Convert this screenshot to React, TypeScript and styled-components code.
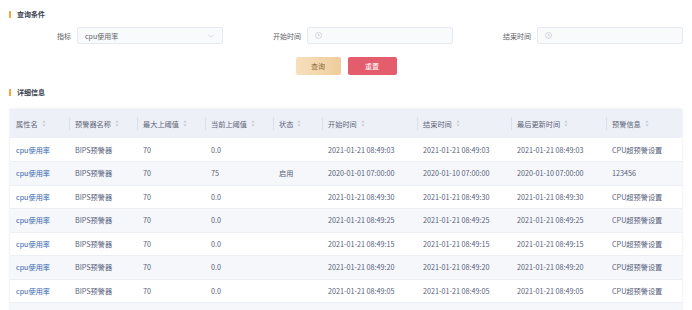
import React from "react";
import styled, { createGlobalStyle } from "styled-components";

const GlobalStyle = createGlobalStyle`
  html, body {
    margin: 0;
    padding: 0;
    background: #fff;
    font-family: "Noto Sans CJK SC", "Noto Sans", sans-serif;
  }
`;

const Page = styled.div`
  width: 692px;
  height: 310px;
  overflow: hidden;
  display: flex;
  flex-direction: column;
  padding-top: 9px;
  box-sizing: border-box;
`;

const SectionTitle = styled.div<{ $mt?: number }>`
  display: flex;
  align-items: center;
  height: 10px;
  margin-left: 9px;
  margin-top: ${(p) => p.$mt ?? 0}px;
  font-size: 7px;
  font-weight: 700;
  color: #39414f;

  &::before {
    content: "";
    width: 2px;
    height: 7px;
    background: #f2a93b;
    margin-right: 6px;
  }
`;

const FormRow = styled.div`
  display: grid;
  grid-template-columns: 230px 230px 230px;
  margin-top: 8px;
`;

const Field = styled.div`
  display: flex;
  align-items: center;
`;

const Label = styled.span`
  width: 71px;
  margin-right: 6px;
  text-align: right;
  font-size: 7px;
  color: #606266;
`;

const InputBox = styled.div`
  width: 146px;
  height: 17px;
  box-sizing: border-box;
  border: 1px solid #e6e9ef;
  border-radius: 2px;
  background: #f9fafc;
  display: flex;
  align-items: center;
  padding: 0 8px 0 7px;
  font-size: 7px;
  color: #606266;
`;

const SelectText = styled.span`
  flex: 1;
`;

const Buttons = styled.div`
  display: flex;
  justify-content: center;
  gap: 7px;
  margin-top: 13px;
`;

const Button = styled.button<{ $variant: "query" | "reset" }>`
  width: ${(p) => (p.$variant === "query" ? 45 : 49)}px;
  height: 18px;
  border: none;
  border-radius: 2px;
  padding: 0;
  font-family: inherit;
  font-size: 7px;
  cursor: pointer;
  color: ${(p) => (p.$variant === "query" ? "#8a6a3c" : "#fff")};
  background: ${(p) =>
    p.$variant === "query"
      ? "linear-gradient(90deg, #f7dfbd, #eecd9b)"
      : "#e35d6d"};
`;

const TableWrap = styled.div`
  margin: 12px 0 0 10px;
  width: 672px;
  box-shadow: 0 0 3px rgba(0, 0, 0, 0.1);
`;

const Table = styled.table`
  width: 100%;
  border-collapse: collapse;
  table-layout: fixed;
  font-size: 7.2px;
`;

const Th = styled.th`
  position: relative;
  height: 29px;
  padding: 0 0 0 6px;
  background: #edf0f7;
  color: #5d6577;
  font-weight: 400;
  text-align: left;
  white-space: nowrap;

  &:not(:first-child)::before {
    content: "";
    position: absolute;
    left: 0;
    top: 8px;
    height: 13px;
    width: 1px;
    background: #dcdfe8;
  }
`;

const HeadInner = styled.span`
  display: inline-flex;
  align-items: center;
  gap: 4px;
`;

const Tr = styled.tr<{ $striped: boolean }>`
  height: 23.5px;
  background: ${(p) => (p.$striped ? "#f5f7fa" : "#fff")};
  border-bottom: 1px solid #ebeef5;
`;

const Td = styled.td<{ $link?: boolean }>`
  padding: 0 0 0 6px;
  color: ${(p) => (p.$link ? "#3565ad" : "#56607a")};
  white-space: nowrap;
  overflow: hidden;
`;

const SortIcon = () => (
  <svg width="4" height="7" viewBox="0 0 4 7">
    <path d="M2 0.5 L3.6 2.6 H0.4 Z" fill="#c0c4cc" />
    <path d="M2 6.5 L3.6 4.4 H0.4 Z" fill="#c0c4cc" />
  </svg>
);

const ClockIcon = () => (
  <svg width="7" height="7" viewBox="0 0 14 14">
    <circle cx="7" cy="7" r="6" fill="none" stroke="#c0c4cc" strokeWidth="1.3" />
    <path d="M7 3.5 V7 H9.8" fill="none" stroke="#c0c4cc" strokeWidth="1.3" />
  </svg>
);

const Chevron = () => (
  <svg width="6" height="4" viewBox="0 0 12 8">
    <path d="M1 1.5 L6 6.5 L11 1.5" fill="none" stroke="#c0c4cc" strokeWidth="1.2" />
  </svg>
);

const columns = [
  { title: "属性名", width: 59 },
  { title: "预警器名称", width: 68 },
  { title: "最大上阈值", width: 68 },
  { title: "当前上阈值", width: 68 },
  { title: "状态", width: 49 },
  { title: "开始时间", width: 95 },
  { title: "结束时间", width: 94 },
  { title: "最后更新时间", width: 95 },
  { title: "预警信息", width: 76 },
];

const t = (s: string) => `2021-01-21 08:49:${s}`;

const rows: string[][] = [
  ["cpu使用率", "BIPS预警器", "70", "0.0", "", t("03"), t("03"), t("03"), "CPU超预警设置"],
  ["cpu使用率", "BIPS预警器", "70", "75", "启用", "2020-01-01 07:00:00", "2020-01-10 07:00:00", "2020-01-10 07:00:00", "123456"],
  ["cpu使用率", "BIPS预警器", "70", "0.0", "", t("30"), t("30"), t("30"), "CPU超预警设置"],
  ["cpu使用率", "BIPS预警器", "70", "0.0", "", t("25"), t("25"), t("25"), "CPU超预警设置"],
  ["cpu使用率", "BIPS预警器", "70", "0.0", "", t("15"), t("15"), t("15"), "CPU超预警设置"],
  ["cpu使用率", "BIPS预警器", "70", "0.0", "", t("20"), t("20"), t("20"), "CPU超预警设置"],
  ["cpu使用率", "BIPS预警器", "70", "0.0", "", t("05"), t("05"), t("05"), "CPU超预警设置"],
  // next row starts at the bottom edge; its content is below the fold
  ["", "", "", "", "", "", "", "", ""],
];

const App: React.FC = () => {
  return (
    <Page>
      <GlobalStyle />
      <SectionTitle>查询条件</SectionTitle>
      <FormRow>
        <Field>
          <Label>指标</Label>
          <InputBox>
            <SelectText>cpu使用率</SelectText>
            <Chevron />
          </InputBox>
        </Field>
        <Field>
          <Label>开始时间</Label>
          <InputBox>
            <ClockIcon />
          </InputBox>
        </Field>
        <Field>
          <Label>结束时间</Label>
          <InputBox>
            <ClockIcon />
          </InputBox>
        </Field>
      </FormRow>
      <Buttons>
        <Button $variant="query">查询</Button>
        <Button $variant="reset">重置</Button>
      </Buttons>
      <SectionTitle $mt={12}>详细信息</SectionTitle>
      <TableWrap>
        <Table>
          <colgroup>
            {columns.map((c) => (
              <col key={c.title} style={{ width: c.width }} />
            ))}
          </colgroup>
          <thead>
            <tr>
              {columns.map((c) => (
                <Th key={c.title}>
                  <HeadInner>
                    {c.title}
                    <SortIcon />
                  </HeadInner>
                </Th>
              ))}
            </tr>
          </thead>
          <tbody>
            {rows.map((r, i) => (
              <Tr key={i} $striped={i % 2 === 1}>
                {r.map((cell, j) => (
                  <Td key={j} $link={j === 0}>
                    {cell}
                  </Td>
                ))}
              </Tr>
            ))}
          </tbody>
        </Table>
      </TableWrap>
    </Page>
  );
};

export default App;
